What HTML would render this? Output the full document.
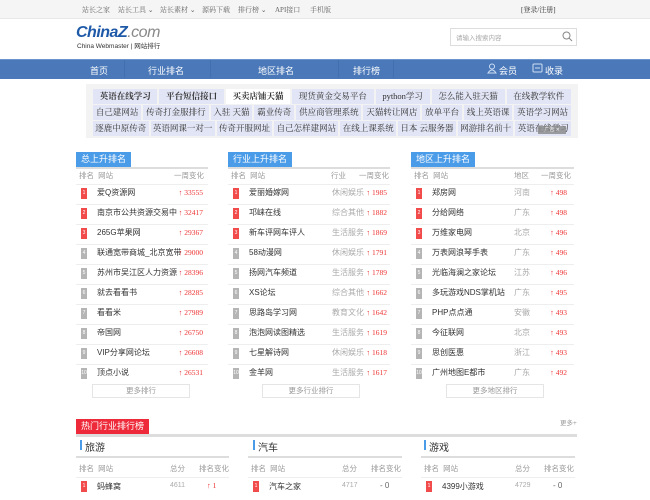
<!DOCTYPE html>
<html><head><meta charset="utf-8"><style>
*{margin:0;padding:0;box-sizing:border-box}
body{width:650px;height:500px;overflow:hidden;background:#fff;font-family:"Liberation Sans","Noto Sans CJK SC",sans-serif;position:relative;color:#333}
.a{position:absolute;white-space:nowrap}
.top{left:0;top:0;width:650px;height:19px;background:#f5f5f5;border-bottom:1px solid #e8e8e8}
.tl{font-size:7px;color:#666;top:5px;font-family:"Liberation Serif","Noto Serif CJK SC",serif}
.nav{left:0;top:59px;width:650px;height:20px;background:#4a78b8;border-top:1px solid #6a94cc}
.ni{color:#fff;font-size:9px;top:64px}
.sep{top:60px;width:1px;height:18px;background:#4270ae}
.ad{left:86px;top:84px;width:492px;height:54px;background:#f3f3f3;padding:5px 7px}
.ar{display:flex;gap:2px;margin-bottom:1px;height:15px}
.ar span{flex:auto;background:#e2e5f5;text-align:center;font-family:"Liberation Serif","Noto Serif CJK SC",serif;font-size:8.5px;line-height:15px;color:#333;white-space:nowrap;overflow:hidden}
.tab{height:15px;line-height:15px;color:#fff;font-size:9px;padding:0 5px;background:#4a9be8}
.ln{height:2px;background:#ddd}
.h{font-size:7.5px;color:#999}
.bd{width:6px;height:11px;font-size:5px;color:#fff;text-align:center;line-height:11px}
.r{background:#f24b4b}.g{background:#b5b5b5}
.nm{font-size:8px;color:#333}
.cg{font-size:7.5px;color:#e33;font-family:"Liberation Serif",serif}
.ct{font-size:8px;color:#aaa}
.rl{height:1px;background:#eee}
.more{height:14px;border:1px solid #e5e5e5;font-size:7.5px;color:#999;text-align:center;line-height:12px}
</style></head><body>
<div class="a top"></div>
<div class="a tl" style="left:82px">站长之家</div>
<div class="a tl" style="left:118px">站长工具 ⌄</div>
<div class="a tl" style="left:160px">站长素材 ⌄</div>
<div class="a tl" style="left:202px">源码下载</div>
<div class="a tl" style="left:238px">排行榜 ⌄</div>
<div class="a tl" style="left:275px">API接口</div>
<div class="a tl" style="left:310px">手机版</div>
<div class="a tl" style="left:521px;color:#333">[登录/注册]</div>

<div class="a" style="left:76px;top:24px;font-size:16px;font-weight:bold;font-style:italic;color:#1e5aa8;letter-spacing:-0.5px">ChinaZ<span style="color:#888;font-weight:normal">.com</span></div>
<div class="a" style="left:77px;top:40px;font-size:6.5px;color:#333">China Webmaster | 网站排行</div>
<div class="a" style="left:450px;top:28px;width:127px;height:18px;border:1px solid #ddd"></div>
<div class="a" style="left:456px;top:32px;font-size:6.5px;color:#aaa">请输入搜索内容</div>
<svg class="a" style="left:562px;top:31px" width="11" height="11" viewBox="0 0 11 11"><circle cx="4.5" cy="4.5" r="3.5" fill="none" stroke="#888" stroke-width="1"/><line x1="7" y1="7" x2="10" y2="10" stroke="#888"/></svg>

<div class="a nav"></div>
<div class="a ni" style="left:90px">首页</div>
<div class="a sep" style="left:124px"></div>
<div class="a ni" style="left:148px">行业排名</div>
<div class="a sep" style="left:210px"></div>
<div class="a ni" style="left:258px">地区排名</div>
<div class="a sep" style="left:338px"></div>
<div class="a ni" style="left:353px">排行榜</div>
<div class="a sep" style="left:393px"></div>
<svg class="a" style="left:487px;top:63px" width="10" height="11"><circle cx="5" cy="3.5" r="2.5" fill="none" stroke="#cfe0f5"/><path d="M1 10 Q5 4 9 10 Z" fill="none" stroke="#cfe0f5"/></svg>
<div class="a ni" style="left:499px">会员</div>
<svg class="a" style="left:532px;top:63px" width="11" height="11"><rect x="1" y="1" width="9" height="8" rx="1" fill="none" stroke="#cfe0f5"/><path d="M3 5h5" stroke="#cfe0f5"/></svg>
<div class="a ni" style="left:545px">收录</div>

<div class="a ad">
<div class="ar"><span style="font-weight:bold">英语在线学习</span><span style="font-weight:bold">平台短信接口</span><span style="background:#fff;font-weight:bold">买卖店铺天猫</span><span>现货黄金交易平台</span><span>python学习</span><span>怎么能入驻天猫</span><span>在线教学软件</span></div>
<div class="ar"><span>自己建网站</span><span>传奇打金服排行</span><span>入驻 天猫</span><span>霸业传奇</span><span>供应商管理系统</span><span>天猫转让网店</span><span>放单平台</span><span>线上英语课</span><span>英语学习网站</span></div>
<div class="ar"><span>逐鹿中原传奇</span><span>英语网课一对一</span><span>传奇开服网址</span><span>自己怎样建网站</span><span>在线上课系统</span><span>日本 云服务器</span><span>网游排名前十</span><span>英语在线学习</span></div>
</div>
<div class="a" style="left:538px;top:126px;width:28px;height:8px;background:#888;opacity:.8;font-size:5px;color:#fff;line-height:8px;text-align:center">广告 ✕</div>

<div class="a" style="left:76px;top:149px;width:132px"><div class="tab" style="display:inline-block">总上升排名</div><div class="ln"></div></div>
<div class="a" style="left:228px;top:149px;width:162px"><div class="tab" style="display:inline-block">行业上升排名</div><div class="ln"></div></div>
<div class="a" style="left:411px;top:149px;width:163px"><div class="tab" style="display:inline-block">地区上升排名</div><div class="ln"></div></div>

<div class="a h" style="left:79px;top:170px">排名 &nbsp;网站</div><div class="a h" style="left:174px;top:170px">一周变化</div>
<div class="a h" style="left:231px;top:170px">排名 &nbsp;网站</div><div class="a h" style="left:331px;top:170px">行业</div><div class="a h" style="left:359px;top:170px">一周变化</div>
<div class="a h" style="left:414px;top:170px">排名 &nbsp;网站</div><div class="a h" style="left:514px;top:170px">地区</div><div class="a h" style="left:541px;top:170px">一周变化</div>

<div class="a" style="left:76px;top:184px;width:132px;height:200px;background:repeating-linear-gradient(#eee 0 1px,transparent 1px 20px)"></div>
<div class="a" style="left:228px;top:184px;width:162px;height:200px;background:repeating-linear-gradient(#eee 0 1px,transparent 1px 20px)"></div>
<div class="a" style="left:411px;top:184px;width:163px;height:200px;background:repeating-linear-gradient(#eee 0 1px,transparent 1px 20px)"></div>

<div class="a" style="left:81px;top:188px"><div class="bd r">1</div><div class="bd r" style="margin-top:9px">2</div><div class="bd r" style="margin-top:9px">3</div><div class="bd g" style="margin-top:9px">4</div><div class="bd g" style="margin-top:9px">5</div><div class="bd g" style="margin-top:9px">6</div><div class="bd g" style="margin-top:9px">7</div><div class="bd g" style="margin-top:9px">8</div><div class="bd g" style="margin-top:9px">9</div><div class="bd g" style="margin-top:9px">10</div></div>
<div class="a" style="left:233px;top:188px"><div class="bd r">1</div><div class="bd r" style="margin-top:9px">2</div><div class="bd r" style="margin-top:9px">3</div><div class="bd g" style="margin-top:9px">4</div><div class="bd g" style="margin-top:9px">5</div><div class="bd g" style="margin-top:9px">6</div><div class="bd g" style="margin-top:9px">7</div><div class="bd g" style="margin-top:9px">8</div><div class="bd g" style="margin-top:9px">9</div><div class="bd g" style="margin-top:9px">10</div></div>
<div class="a" style="left:416px;top:188px"><div class="bd r">1</div><div class="bd r" style="margin-top:9px">2</div><div class="bd r" style="margin-top:9px">3</div><div class="bd g" style="margin-top:9px">4</div><div class="bd g" style="margin-top:9px">5</div><div class="bd g" style="margin-top:9px">6</div><div class="bd g" style="margin-top:9px">7</div><div class="bd g" style="margin-top:9px">8</div><div class="bd g" style="margin-top:9px">9</div><div class="bd g" style="margin-top:9px">10</div></div>

<div class="a nm" style="left:97px;top:183px;line-height:20px">爱Q资源网<br>南京市公共资源交易中<br>265G苹果网<br>联通宽带商城_北京宽带<br>苏州市吴江区人力资源<br>就去看看书<br>看看米<br>帝国网<br>VIP分享网论坛<br>顶点小说</div>
<div class="a cg" style="left:150px;width:53px;text-align:right;top:183px;line-height:20px">↑ 33555<br>↑ 32417<br>↑ 29367<br>↑ 29000<br>↑ 28396<br>↑ 28285<br>↑ 27989<br>↑ 26750<br>↑ 26608<br>↑ 26531</div>

<div class="a nm" style="left:249px;top:183px;line-height:20px">爱丽婚嫁网<br>邛崃在线<br>新车评网车评人<br>58动漫网<br>扬网汽车频道<br>XS论坛<br>思路岛学习网<br>泡泡网读图精选<br>七星解诗网<br>金羊网</div>
<div class="a ct" style="left:332px;top:183px;line-height:20px">休闲娱乐<br>综合其他<br>生活服务<br>休闲娱乐<br>生活服务<br>综合其他<br>教育文化<br>生活服务<br>休闲娱乐<br>生活服务</div>
<div class="a cg" style="left:360px;width:27px;text-align:right;top:183px;line-height:20px">↑ 1985<br>↑ 1882<br>↑ 1869<br>↑ 1791<br>↑ 1789<br>↑ 1662<br>↑ 1642<br>↑ 1619<br>↑ 1618<br>↑ 1617</div>

<div class="a nm" style="left:432px;top:183px;line-height:20px">郑房网<br>分给网络<br>万维家电网<br>万表网浪琴手表<br>光临海澜之家论坛<br>多玩游戏NDS掌机站<br>PHP点点通<br>今征联网<br>思创医惠<br>广州地图E都市</div>
<div class="a ct" style="left:514px;top:183px;line-height:20px">河南<br>广东<br>北京<br>广东<br>江苏<br>广东<br>安徽<br>北京<br>浙江<br>广东</div>
<div class="a cg" style="left:540px;width:27px;text-align:right;top:183px;line-height:20px">↑ 498<br>↑ 498<br>↑ 496<br>↑ 496<br>↑ 496<br>↑ 495<br>↑ 493<br>↑ 493<br>↑ 493<br>↑ 492</div>

<div class="a more" style="left:92px;top:384px;width:98px">更多排行</div>
<div class="a more" style="left:262px;top:384px;width:98px">更多行业排行</div>
<div class="a more" style="left:446px;top:384px;width:98px">更多地区排行</div>

<div class="a" style="left:76px;top:416px;width:501px"><div class="tab" style="display:inline-block;background:#ee2a3a">热门行业排行榜</div><div class="ln" style="height:3px"></div></div>
<div class="a" style="left:560px;top:417px;font-size:6.5px;color:#999">更多+</div>

<div class="a" style="left:80px;top:440px;width:2px;height:10px;background:#4a9be8"></div><div class="a" style="left:85px;top:439px;font-size:10px">旅游</div>
<div class="a" style="left:253px;top:440px;width:2px;height:10px;background:#4a9be8"></div><div class="a" style="left:258px;top:439px;font-size:10px">汽车</div>
<div class="a" style="left:424px;top:440px;width:2px;height:10px;background:#4a9be8"></div><div class="a" style="left:429px;top:439px;font-size:10px">游戏</div>

<div class="a" style="left:76px;top:456px;width:153px;height:2px;background:#ddd"></div>
<div class="a" style="left:248px;top:456px;width:154px;height:2px;background:#ddd"></div>
<div class="a" style="left:421px;top:456px;width:154px;height:2px;background:#ddd"></div>
<div class="a h" style="left:79px;top:463px">排名 &nbsp;网站</div><div class="a h" style="left:170px;top:463px">总分</div><div class="a h" style="left:199px;top:463px">排名变化</div>
<div class="a h" style="left:251px;top:463px">排名 &nbsp;网站</div><div class="a h" style="left:342px;top:463px">总分</div><div class="a h" style="left:371px;top:463px">排名变化</div>
<div class="a h" style="left:424px;top:463px">排名 &nbsp;网站</div><div class="a h" style="left:515px;top:463px">总分</div><div class="a h" style="left:544px;top:463px">排名变化</div>
<div class="a rl" style="left:76px;top:477px;width:153px"></div>
<div class="a rl" style="left:248px;top:477px;width:154px"></div>
<div class="a rl" style="left:421px;top:477px;width:154px"></div>
<div class="a bd r" style="left:81px;top:481px">1</div><div class="a nm" style="left:97px;top:481px">蚂蜂窝</div><div class="a ct" style="left:170px;top:482px;font-size:7px">4611</div><div class="a cg" style="left:207px;top:481px">↑ 1</div>
<div class="a bd r" style="left:253px;top:481px">1</div><div class="a nm" style="left:269px;top:481px">汽车之家</div><div class="a ct" style="left:342px;top:482px;font-size:7px">4717</div><div class="a ct" style="left:380px;top:481px;color:#666">- 0</div>
<div class="a bd r" style="left:426px;top:481px">1</div><div class="a nm" style="left:442px;top:481px">4399小游戏</div><div class="a ct" style="left:515px;top:482px;font-size:7px">4729</div><div class="a ct" style="left:553px;top:481px;color:#666">- 0</div>
</body></html>
